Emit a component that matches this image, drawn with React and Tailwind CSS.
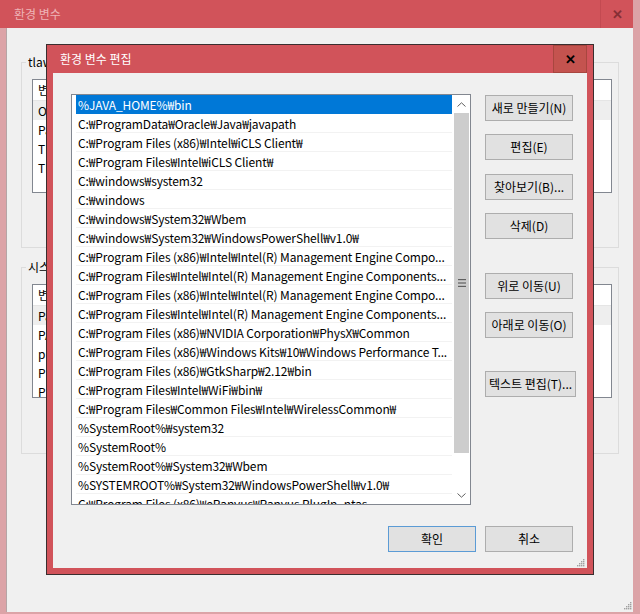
import React from "react";

const paths = [
  "%JAVA_HOME%₩bin",
  "C:₩ProgramData₩Oracle₩Java₩javapath",
  "C:₩Program Files (x86)₩Intel₩iCLS Client₩",
  "C:₩Program Files₩Intel₩iCLS Client₩",
  "C:₩windows₩system32",
  "C:₩windows",
  "C:₩windows₩System32₩Wbem",
  "C:₩windows₩System32₩WindowsPowerShell₩v1.0₩",
  "C:₩Program Files (x86)₩Intel₩Intel(R) Management Engine Compo...",
  "C:₩Program Files₩Intel₩Intel(R) Management Engine Components...",
  "C:₩Program Files (x86)₩Intel₩Intel(R) Management Engine Compo...",
  "C:₩Program Files₩Intel₩Intel(R) Management Engine Components...",
  "C:₩Program Files (x86)₩NVIDIA Corporation₩PhysX₩Common",
  "C:₩Program Files (x86)₩Windows Kits₩10₩Windows Performance T...",
  "C:₩Program Files (x86)₩GtkSharp₩2.12₩bin",
  "C:₩Program Files₩Intel₩WiFi₩bin₩",
  "C:₩Program Files₩Common Files₩Intel₩WirelessCommon₩",
  "%SystemRoot%₩system32",
  "%SystemRoot%",
  "%SystemRoot%₩System32₩Wbem",
  "%SYSTEMROOT%₩System32₩WindowsPowerShell₩v1.0₩",
  "C:₩Program Files (x86)₩eRanvus₩Ranvus PlugIn_ntas",
];

const userVars = ["OneDrive", "Path", "TEMP", "TMP"];
const sysVars = ["Path", "PATHEXT", "processor_arch", "PROCESSOR_ARCHITECTURE", "PROCESSOR_IDENTIFIER"];

function Grip() {
  return (
    <svg width="8" height="8" viewBox="0 0 8 8">
      {[
        [6, 0],
        [4, 2],
        [6, 2],
        [2, 4],
        [4, 4],
        [6, 4],
        [0, 6],
        [2, 6],
        [4, 6],
        [6, 6],
      ].map(([x, y]) => (
        <rect key={`${x}-${y}`} x={x} y={y} width="1.4" height="1.4" fill="#a0a0a0" />
      ))}
    </svg>
  );
}

function Btn({ children, w = "w-[88px]", primary }) {
  return (
    <div
      className={`${w} h-[26px] shrink-0 flex items-center justify-center bg-[#e1e1e1] border ${
        primary ? "border-[#5b9bd5]" : "border-[#adadad]"
      } text-[12px] text-black whitespace-nowrap`}
    >
      {children}
    </div>
  );
}

function VarList({ rows }) {
  return (
    <div className="h-[114px] w-[580px] border border-[#828790] bg-white overflow-hidden">
      <div className="h-[21px] flex items-center pl-[5px] border-b border-[#e5e5e5]">변수</div>
      {rows.map((r, i) => (
        <div
          key={r}
          className={`h-[19px] flex items-center pl-[5px] ${i === 0 ? "bg-[#eeeeee]" : ""}`}
        >
          {r}
        </div>
      ))}
    </div>
  );
}

export default function App() {
  return (
    <div
      className="relative w-[640px] h-[614px] overflow-hidden bg-[#dca3a7] text-[12px] text-black"
      style={{ fontFamily: '"Noto Sans CJK KR", "Noto Sans", sans-serif' }}
    >
      {/* back window: 환경 변수 */}
      <div className="absolute left-0 top-0 w-[633px] h-[612px] flex flex-col">
        <div className="h-[28px] flex bg-[#d1535a]">
          <div className="flex-1 flex items-center pl-[14px] text-[#eeb3b6]">환경 변수</div>
          <div className="w-[33px] flex items-center justify-center border-l border-[#c34a51] text-[#862f35] font-bold text-[13px]">
            ✕
          </div>
        </div>
        <div className="relative flex-1 ml-[6px] border-l border-[#b5a5a6] bg-[#f0f0f0] pl-[14px] pt-[34px] flex flex-col gap-[19px]">
          <div className="relative h-[186px] w-[598px] border border-[#dcdcdc] pt-[16px] pl-[10px]">
            <span className="absolute -top-[10px] left-[4px] bg-[#f0f0f0] px-[2px]">
              tlaw에 대한 사용자 변수(U)
            </span>
            <VarList rows={userVars} />
          </div>
          <div className="relative h-[187px] w-[598px] border border-[#dcdcdc] pt-[16px] pl-[10px]">
            <span className="absolute -top-[10px] left-[4px] bg-[#f0f0f0] px-[2px]">
              시스템 변수(S)
            </span>
            <VarList rows={sysVars} />
          </div>
          <div className="absolute right-[1px] bottom-[2px]">
            <Grip />
          </div>
        </div>
      </div>

      {/* front dialog: 환경 변수 편집 */}
      <div className="absolute left-[46px] top-[44px] w-[548px] h-[531px] border border-[#3a2e2f] bg-[#d1535a] flex flex-col">
        <div className="h-[28px] flex">
          <div className="flex-1 flex items-center pl-[13px] text-white">환경 변수 편집</div>
          <div className="w-[34px] mr-[6px] flex items-center justify-center bg-[#c4534f] border border-[#a8463f] text-black font-bold text-[13px]">
            ✕
          </div>
        </div>
        <div className="relative flex-1 mx-[6px] mb-[6px] bg-[#f0f0f0] pt-[21px] pl-[18px] pr-[11px] flex flex-col">
          <div className="flex">
            <div className="w-[400px] h-[411px] shrink-0 border border-[#828790] bg-white flex">
              <div className="flex-1 overflow-hidden pl-[4px] mr-[1px]">
                {paths.map((p, i) => (
                  <div
                    key={i}
                    className={`h-[19px] pl-[2px] leading-[19px] tracking-[-0.12px] whitespace-nowrap overflow-hidden border-b ${
                      i === 0 ? "bg-[#0078d7] text-white border-[#0078d7]" : "border-[#f2f2f2]"
                    }`}
                  >
                    {p}
                  </div>
                ))}
              </div>
              <div className="w-[17px] flex flex-col bg-white">
                <div className="h-[18px] flex items-center justify-center">
                  <svg width="9" height="5" viewBox="0 0 9 5">
                    <path d="M0.5 4.5 L4.5 0.8 L8.5 4.5" fill="none" stroke="#606060" strokeWidth="1" />
                  </svg>
                </div>
                <div className="h-[340px] mx-px bg-[#cdcdcd] flex items-center justify-center">
                  <svg width="8" height="8" viewBox="0 0 8 8">
                    <rect x="0" y="0" width="8" height="1.2" fill="#606060" />
                    <rect x="0" y="3.4" width="8" height="1.2" fill="#606060" />
                    <rect x="0" y="6.8" width="8" height="1.2" fill="#606060" />
                  </svg>
                </div>
                <div className="flex-1" />
                <div className="h-[18px] flex items-center justify-center">
                  <svg width="9" height="5" viewBox="0 0 9 5">
                    <path d="M0.5 0.5 L4.5 4.2 L8.5 0.5" fill="none" stroke="#606060" strokeWidth="1" />
                  </svg>
                </div>
              </div>
            </div>
            <div className="ml-[14px] mt-[1px] flex flex-col">
              <Btn>새로 만들기(N)</Btn>
              <div className="mt-[13px]">
                <Btn>편집(E)</Btn>
              </div>
              <div className="mt-[14px]">
                <Btn>찾아보기(B)...</Btn>
              </div>
              <div className="mt-[13px]">
                <Btn>삭제(D)</Btn>
              </div>
              <div className="mt-[34px]">
                <Btn>위로 이동(U)</Btn>
              </div>
              <div className="mt-[13px]">
                <Btn>아래로 이동(O)</Btn>
              </div>
              <div className="mt-[33px]">
                <Btn w="w-[91px]">텍스트 편집(T)...</Btn>
              </div>
            </div>
          </div>
          <div className="mt-[21px] pr-[3px] flex justify-end gap-[9px]">
            <Btn primary>확인</Btn>
            <Btn>취소</Btn>
          </div>
          <div className="absolute right-[2px] bottom-[1px]">
            <Grip />
          </div>
        </div>
      </div>
    </div>
  );
}
